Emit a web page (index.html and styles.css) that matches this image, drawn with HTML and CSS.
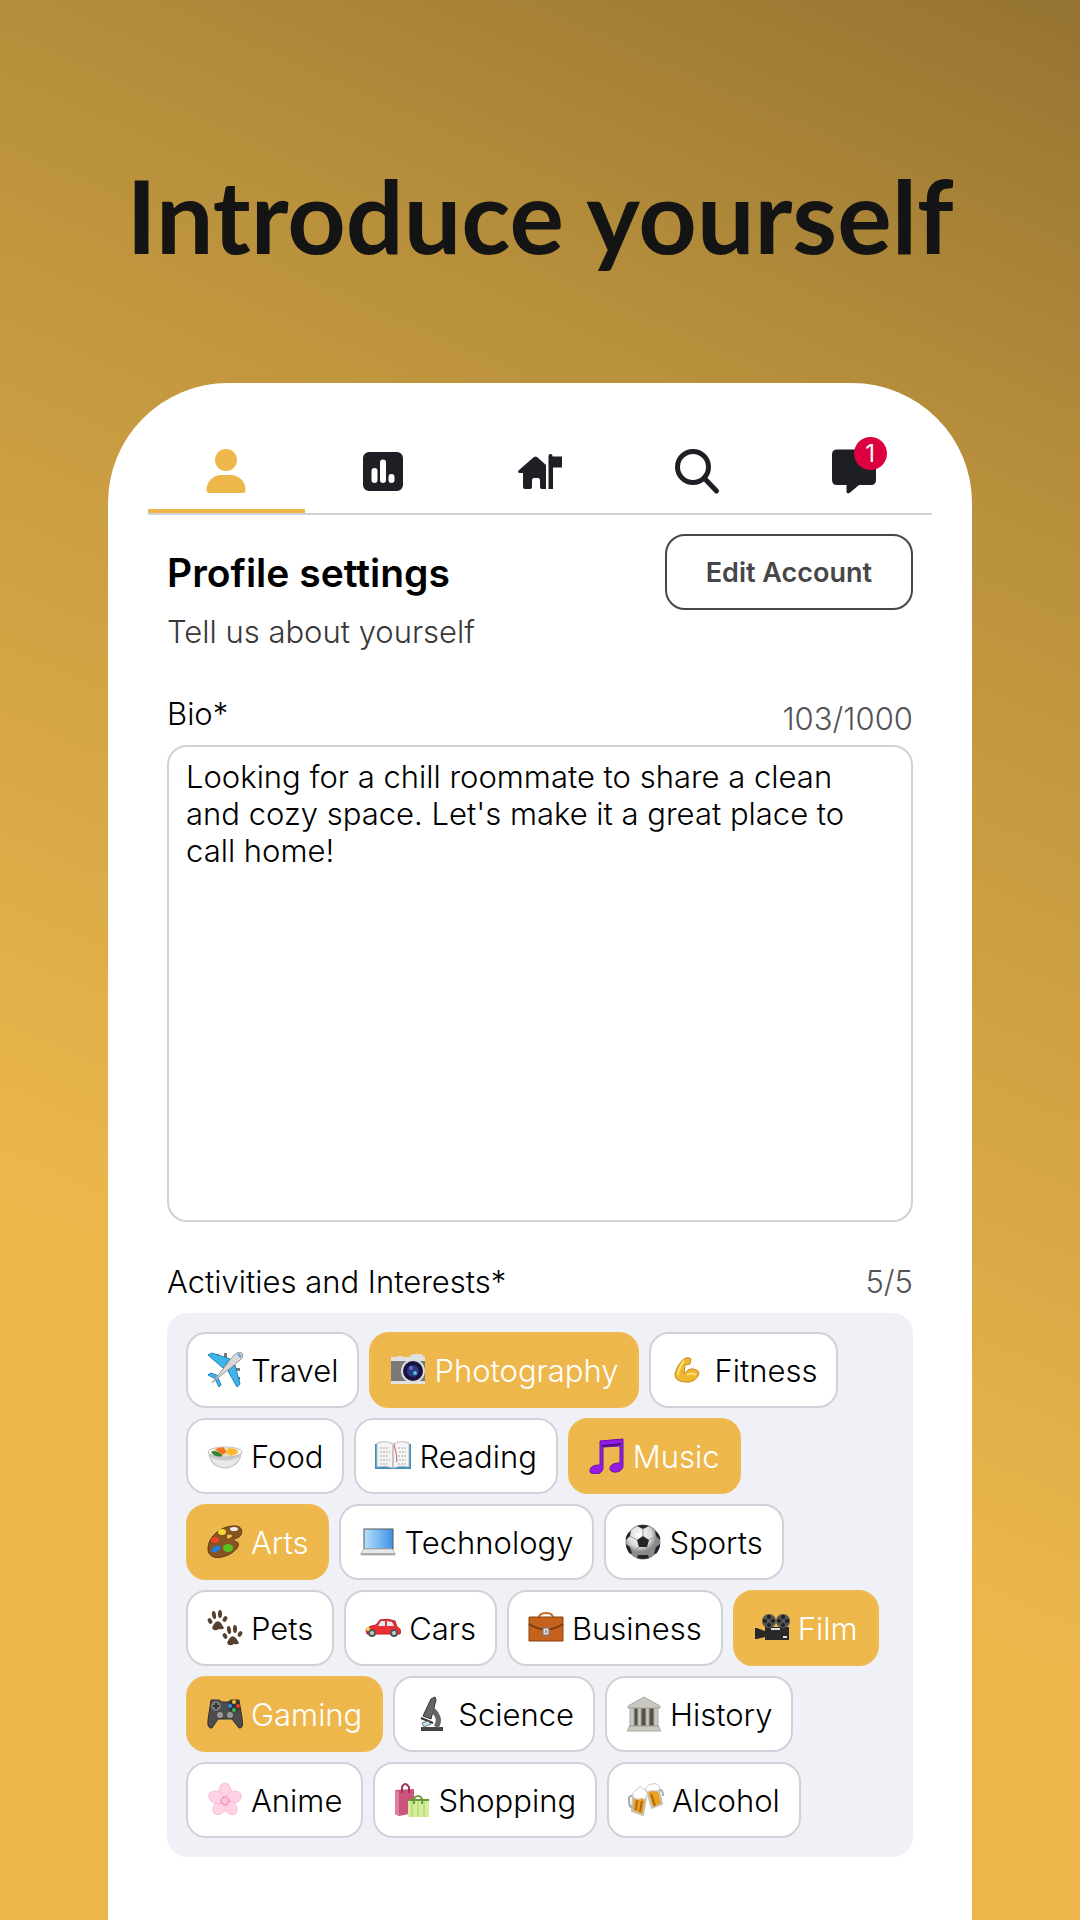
FILE: index.html
```html
<!DOCTYPE html>
<html lang="en">
<head>
<meta charset="utf-8">
<meta name="viewport" content="width=device-width, initial-scale=1">
<title>Introduce yourself</title>
<link rel="stylesheet" href="styles.css">
</head>
<body>
<h1 class="headline">Introduce yourself</h1>
<main class="phone">
  <nav class="tabs" aria-label="Main">
    <a class="tab tab-active" href="#profile" aria-label="Profile" aria-current="page">
      <svg class="tab-icon" viewBox="0 0 48 48"><circle cx="24" cy="13" r="11"/><path d="M4.500 43c0-8 6-15 15-15h9c9 0 15 7 15 15 0 2-1 3-2 3h-35c-1 0-2-1-2-3z"/></svg>
    </a>
    <a class="tab" href="#stats" aria-label="Statistics">
      <svg class="tab-icon" viewBox="0 0 48 48"><path fill-rule="evenodd" d="M10 5h28a6 6 0 0 1 6 6v27a6 6 0 0 1-6 6H10a6 6 0 0 1-6-6V11a6 6 0 0 1 6-6zM12.500 24v9a3 3 0 0 0 6 0v-9a3 3 0 0 0-6 0zM21 15.500V33a3 3 0 0 0 6 0V15.500a3 3 0 0 0-6 0zM29.500 30v3a3 3 0 0 0 6 0v-3a3 3 0 0 0-6 0z"/></svg>
    </a>
    <a class="tab" href="#listings" aria-label="Listings">
      <svg class="tab-icon" viewBox="0 0 48 48"><path d="M2.500 23.500 18 10q1.500-1 3 0l9 8v24h-4q-2 0-2-2v-7q0-2-2-2h-4q-2 0-2 2v7q0 2-2 2H9q-2 0-2-2V26H4q-3-.5-1.500-2.500zM32.500 9a2 2 0 0 1 4 0v.500H46v11h-9V42h-4.500z"/></svg>
    </a>
    <a class="tab" href="#search" aria-label="Search">
      <svg class="tab-icon tab-line" viewBox="0 0 48 48"><circle cx="20" cy="20" r="15.500"/><path d="m32 32 11.500 12"/></svg>
    </a>
    <a class="tab" href="#messages" aria-label="Messages, 1 unread">
      <span class="chat"><svg class="tab-icon" viewBox="0 0 48 48"><path d="M7 2.500h34q5 0 5 5V33q0 5-5 5H29l-9.500 8q-3 1-3-1v-7H7q-5 0-5-5V7.500q0-5 5-5z"/></svg><span class="badge">1</span></span>
    </a>
  </nav>
  <div class="content">
    <header class="profile-head">
      <div class="profile-text">
        <h2 class="profile-title">Profile settings</h2>
        <p class="profile-sub">Tell us about yourself</p>
      </div>
      <button class="edit" type="button">Edit Account</button>
    </header>
    <section class="field">
      <div class="field-head bio-head"><label for="bio">Bio*</label><span class="count bio-count">103/1000</span></div>
      <textarea class="bio" id="bio" maxlength="1000">Looking for a chill roommate to share a clean and cozy space. Let's make it a great place to call home!</textarea>
    </section>
    <section class="field interests">
      <div class="field-head"><h3 class="field-title" id="interests-title">Activities and Interests*</h3><span class="count">5/5</span></div>
      <div class="chips" role="group" aria-labelledby="interests-title">
        <button class="chip" type="button"><svg class="emoji" viewBox="0 0 36 36"><path fill="#777" d="M9 2h3v5H9zM17 1h3v5h-3zM28 16h5v3h-5zM28 25h5v3h-5z"/><path fill="#42b4ec" stroke="#2482b5" d="m1 3 4-2 18 6-7 9zM28 13l5 19-3 3-9-16zM1 23l3-2 8 3-3 3zM11 26l3 7-2 2-4-8z"/><path fill="#d8d8d8" stroke="#999" d="M5 31 27 3q4-4 8-2 2 4-3 8L6 30z"/><path stroke="#42a7da" stroke-width="2" d="m31 2 3 3"/></svg>Travel</button>
        <button class="chip chip-on" type="button" aria-pressed="true"><svg class="emoji" viewBox="0 0 36 36"><path fill="#ddd" d="M7 4h6v4H7zM20 4l3-2h9l3 5H18z"/><rect x="1" y="5" width="34" height="26" rx="1" fill="#797979"/><path fill="#e2e2e2" d="M1 5h34v4H1zM1 29h34v3H1z"/><circle cx="23" cy="19" r="12" fill="#ddd"/><circle cx="23" cy="19" r="10" fill="#17133e"/><circle cx="23" cy="19" r="6" fill="#303686"/><circle cx="25" cy="21" r="2" fill="#4cc3d6"/><circle cx="21" cy="16" r="2" fill="#6f70ce"/></svg>Photography</button>
        <button class="chip" type="button"><svg class="emoji" viewBox="0 0 36 36"><path fill="#edb72f" stroke="#c88c1e" d="M14 7q4-3 7 0l-1 5-5 1-1 9q5-6 9-5 8 1 5 7-4 7-13 6-11-1-10-8Q8 11 14 7z"/><path fill="none" stroke="#ffe178" stroke-width="2" d="M14 9Q9 15 8 23M17 23q5-3 9 0"/></svg>Fitness</button>
        <button class="chip" type="button"><svg class="emoji" viewBox="0 0 36 36"><path fill="#cacaca" d="M1 14h34q-1 11-10 15-6 3-14 0Q2 26 1 14z"/><ellipse cx="18" cy="14" rx="17" ry="5" fill="#fff" stroke="#bbb"/><ellipse cx="18" cy="14" rx="14" ry="4" fill="#e5dfb7"/><path fill="#2d8830" d="M4 14q5-3 12 4-8 2-12-4z"/><path fill="#f17423" d="m8 11 8-2 4 5-5 3z"/><path fill="#ffb72f" d="m22 10 7 1 2 4-7 3-5-4z"/><path fill="#e9e9e9" d="M3 19q14 7 30 0-5 10-15 10Q8 29 3 19z"/></svg>Food</button>
        <button class="chip" type="button"><svg class="emoji" viewBox="0 0 36 36"><path fill="#3c8ebf" d="M0 6h36v25H0z"/><path fill="#f5f5f5" stroke="#bbb" d="M2 5q9-3 16 1 7-4 16-1v24q-9-2-16 1-7-3-16-1z"/><path fill="none" stroke="#aaa" stroke-dasharray="2 1" d="M5 10h9M5 14h10M5 18h9M5 22h10M5 26h8M23 10h8M24 14h7M23 18h8M24 22h7M23 26h8"/><path fill="none" stroke="#d35b5b" d="M19 6q3 10 3 18"/><path stroke="#999" d="M18 7v23"/></svg>Reading</button>
        <button class="chip chip-on" type="button" aria-pressed="true"><svg class="emoji" viewBox="0 0 36 36"><path fill="#941be5" stroke="#6714a9" d="M11 3 34 1v27c0 7-13 8-13 3 0-5 5-6 10-6V8L14 9v21c0 7-13 8-13 3 0-5 5-6 10-6z"/><path stroke="#4c0e80" stroke-width="2" d="m13 8 19-2"/></svg>Music</button>
        <button class="chip chip-on" type="button" aria-pressed="true"><svg class="emoji" viewBox="0 0 36 36"><path fill="#875620" stroke="#5e3915" fill-rule="evenodd" d="M1 25C1 12 15 1 29 2c9 1 6 11 1 12-4 1-4 3 0 4 5 3-4 13-15 15-9 2-14-2-14-8zM19 13q1 4 5 1 4-3 0-4-5-1-5 3z"/><ellipse cx="15" cy="8" rx="4" ry="3" fill="#f4d931"/><ellipse cx="27" cy="5" rx="4" ry="2" fill="#eee"/><ellipse cx="8" cy="16" rx="4" ry="3" fill="#ef432a"/><ellipse cx="9" cy="25" rx="5" ry="3" fill="#277de1" transform="rotate(-30 9 25)"/><ellipse cx="21" cy="24" rx="5" ry="4" fill="#54c423"/></svg>Arts</button>
        <button class="chip" type="button"><svg class="emoji" viewBox="0 0 36 36"><defs><linearGradient id="screen"><stop stop-color="#b7e1fb"/><stop offset="1" stop-color="#3c92e5"/></linearGradient></defs><rect x="4" y="5" width="29" height="20" fill="url(#screen)" stroke="#555"/><path fill="#e8e8e8" stroke="#bbb" d="M4 25h28l3 4v2H1v-2z"/><path fill="#aaa" d="M1 29h34v2H1z"/></svg>Technology</button>
        <button class="chip" type="button"><svg class="emoji" viewBox="0 0 36 36"><defs><radialGradient id="ball" cx=".4" cy=".3"><stop stop-color="#fff"/><stop offset=".7" stop-color="#d8d8d8"/><stop offset="1" stop-color="#888"/></radialGradient></defs><circle cx="18" cy="18" r="17" fill="url(#ball)" stroke="#888"/><path fill="#252525" d="m18 12 6 4-2 7h-8l-2-7zM12 2q6-2 12 0l-6 3zM1 16l4-4 1-5Q0 11 1 16zM35 16l-4-4-1-5q6 4 5 9zM1 20l4 3 2 6-2 1q-4-5-4-10zM35 20l-4 3-2 6 2 1q4-5 4-10zM13 31h10l1 3q-6 2-12 0z"/><path fill="none" stroke="#999" d="M18 5v7M5 12l7 4M31 12l-7 4M8 28l6-5M28 28l-6-5"/></svg>Sports</button>
        <button class="chip" type="button"><svg class="emoji" viewBox="0 0 36 36"><g id="paw" fill="#56402e"><ellipse cx="3" cy="11" rx="2" ry="3" transform="rotate(-30 3 11)"/><ellipse cx="7" cy="5" rx="2" ry="4" transform="rotate(-10 7 5)"/><ellipse cx="13" cy="4" rx="2" ry="4"/><ellipse cx="18" cy="9" rx="2" ry="3" transform="rotate(30 18 9)"/><path d="M5 18q4-10 9-5l3 5q-1 2-5 1-5 3-7-1z"/></g><use href="#paw" x="15" y="15"/></svg>Pets</button>
        <button class="chip" type="button"><svg class="emoji" viewBox="0 0 36 36"><path fill="#ed2e34" stroke="#b71c25" d="M1 20q2-4 10-5l4-5q8-2 15 1l2 6q5 2 3 7H2z"/><path fill="#dcecf3" d="m16 11-3 5h7v-5zM22 11v5h7l-2-4z"/><circle cx="7" cy="23" r="4" fill="#555"/><circle cx="29" cy="23" r="4" fill="#555"/><circle cx="7" cy="23" r="2" fill="#ccc"/><circle cx="29" cy="23" r="2" fill="#ccc"/><circle cx="3" cy="19" r="2" fill="#f0d85c"/></svg>Cars</button>
        <button class="chip" type="button"><svg class="emoji" viewBox="0 0 36 36"><path fill="none" stroke="#c26a27" stroke-width="2" d="M11 8q0-5 7-5t7 5"/><path fill="#c5621d" stroke="#88400f" d="M1 7h34v24H1z"/><path fill="none" stroke="#7b390f" stroke-width="2" d="M1 14q17 11 34 0"/><rect x="15" y="18" width="6" height="7" fill="#ddd" stroke="#777"/><path stroke="#555" d="M18 20v3"/></svg>Business</button>
        <button class="chip chip-on" type="button" aria-pressed="true"><svg class="emoji" viewBox="0 0 36 36"><path fill="#292929" d="M11 17h24v13H11v-3l-8 2H1V18h2l8 3z"/><circle cx="15" cy="11" r="7" fill="#555"/><circle cx="29" cy="11" r="7" fill="#555"/><g fill="#222"><circle cx="15" cy="7" r="2"/><circle cx="11" cy="11" r="2"/><circle cx="19" cy="11" r="2"/><circle cx="15" cy="15" r="2"/><circle cx="29" cy="7" r="2"/><circle cx="25" cy="11" r="2"/><circle cx="33" cy="11" r="2"/><circle cx="29" cy="15" r="2"/></g><path stroke="#ddd" stroke-width="2" d="M17 19h9M29 27h4"/></svg>Film</button>
        <button class="chip chip-on" type="button" aria-pressed="true"><svg class="emoji" viewBox="0 0 36 36"><path fill="#4c4c4c" stroke="#303030" d="M4 4h8l3 2h6l3-2h8l3 18q2 11-3 10l-7-9H11l-6 9q-5 1-4-8z"/><circle cx="9" cy="10" r="5" fill="#777"/><path stroke="#333" stroke-width="2" d="M9 7v6M6 10h6"/><circle cx="27" cy="10" r="6" fill="#333"/><circle cx="27" cy="6" r="2" fill="#f4c52a"/><circle cx="23" cy="10" r="2" fill="#2d8cf0"/><circle cx="31" cy="10" r="2" fill="#e33"/><circle cx="27" cy="14" r="2" fill="#38b948"/><circle cx="13" cy="19" r="3" fill="#999"/><circle cx="23" cy="19" r="3" fill="#999"/></svg>Gaming</button>
        <button class="chip" type="button"><svg class="emoji" viewBox="0 0 36 36"><path fill="#444" d="M7 31h22v4H7z"/><path fill="#666" stroke="#333" d="m17 3 4-2 1 3-5 19-8-3z"/><path fill="none" stroke="#666" stroke-width="5" d="M19 14q9 9 3 17"/><path stroke="#333" stroke-width="2" d="m7 22 12 5"/><path fill="#bce5f3" stroke="#777" d="m8 27 6-2 3 3-7 3z"/></svg>Science</button>
        <button class="chip" type="button"><svg class="emoji" viewBox="0 0 36 36"><path fill="#55524b" d="M6 11h24v20H6z"/><path fill="#c9c8c0" stroke="#aaa89d" d="m2 10 16-9 16 9v2H2zM4 12h4v18H4zM12 12h3v18h-3zM20 12h3v18h-3zM28 12h4v18h-4zM3 30h30v2l2 3H1l2-3z"/></svg>History</button>
        <button class="chip" type="button"><svg class="emoji" viewBox="0 0 36 36"><g fill="#ffd3e5" stroke="#f8bfd6"><ellipse cx="18" cy="9" rx="6" ry="8"/><ellipse cx="18" cy="9" rx="6" ry="8" transform="rotate(72 18 18)"/><ellipse cx="18" cy="9" rx="6" ry="8" transform="rotate(144 18 18)"/><ellipse cx="18" cy="9" rx="6" ry="8" transform="rotate(216 18 18)"/><ellipse cx="18" cy="9" rx="6" ry="8" transform="rotate(288 18 18)"/></g><circle cx="18" cy="19" r="4" fill="#ffc0da" stroke="#e65692" stroke-dasharray="2 1"/></svg>Anime</button>
        <button class="chip" type="button"><svg class="emoji" viewBox="0 0 36 36"><path fill="#ca547e" d="m1 8 19-1v24L5 34l-4-2z"/><path fill="#dd7fa0" d="m1 8 4 2v24l-4-2z"/><path fill="none" stroke="#a33158" stroke-width="2" d="M8 11V5q3-6 7 0v6"/><path fill="#d7ed9b" d="M14 17h21v18H14z"/><path stroke="#b9df80" stroke-width="2" d="M18 17v18M24 17v18M30 17v18"/><path stroke="#679a32" stroke-width="2" d="M14 18h21"/><path fill="none" stroke="#679a32" stroke-width="2" d="M20 22q-1-8 4-8t4 8"/></svg>Shopping</button>
        <button class="chip" type="button"><svg class="emoji" viewBox="0 0 36 36"><path fill="#e8a21f" stroke="#c7c3b6" stroke-width="2" d="m19 9 11-4 4 17-10 4zM5 14l13 2-3 17-11-4z"/><path fill="none" stroke="#aaa" stroke-width="2" d="M6 14q-6-1-5 5 0 7 5 7M31 8q4-1 4 6"/><path fill="#fff" stroke="#ccc" d="M5 15q-1-6 4-7 3-6 6-1 5 0 4 7-2 5-5 2-4 3-9-1zM18 10q-1-5 3-7 8-4 11 3l-2 3q-7-1-12 1z"/><path stroke="#b8640e" stroke-width="2" d="m9 18-1 10M14 19l-2 11M23 12l4 12"/></svg>Alcohol</button>
      </div>
    </section>
  </div>
</main>
</body>
</html>
```
FILE: styles.css
```css
* { box-sizing: border-box; }

body {
  margin: 0;
  min-height: 100vh;
  display: flex;
  flex-direction: column;
  font-family: Inter, "Liberation Sans", sans-serif;
  font-size: 31px;
  font-weight: 300;
  line-height: 37px;
  color: #000;
  background: linear-gradient(204deg, #957331 0%, #b8903c 22%, #edb74c 70%);
}

h1, h2, h3, p { margin: 0; font-weight: inherit; font-size: inherit; }

button, textarea { font: inherit; color: inherit; }

.headline {
  padding: 155px 0 108px;
  text-align: center;
  font-family: Lato, sans-serif;
  font-weight: 700;
  font-size: 102px;
  line-height: 120px;
  color: #141414;
}

.phone {
  flex: 1;
  margin: 0 10%;
  padding: 60px 40px 63px;
  background: #fff;
  border-radius: 120px 120px 0 0;
}

.tabs {
  display: grid;
  grid-template-columns: repeat(5, 1fr);
  border-bottom: 2px solid #d1d1d9;
}

.tab {
  display: flex;
  justify-content: center;
  padding: 4px 0 14px;
  border-bottom: 4px solid transparent;
  color: #1e1f24;
}

.tab-active { color: #edb74c; border-color: #edb74c; }

.tab-icon { display: block; width: 48px; height: 48px; fill: currentColor; }

.tab-line { fill: none; stroke: currentColor; stroke-width: 5; stroke-linecap: round; }

.chat { position: relative; }

.badge {
  position: absolute;
  top: -10px;
  right: -9px;
  width: 33px;
  height: 33px;
  border-radius: 50%;
  background: #dd0040;
  color: #fff;
  font-size: 24px;
  font-weight: 400;
  line-height: 33px;
  text-align: center;
}

.content { padding: 19px 19px 0; }

.profile-head { display: flex; justify-content: space-between; align-items: flex-start; }

.profile-text { display: grid; gap: 17px; padding-top: 16px; }

.profile-title { font-size: 39px; line-height: 46px; font-weight: 600; }

.profile-sub { color: #383838; }

.edit {
  height: 76px;
  padding: 0 39px;
  border: 2px solid #474747;
  border-radius: 20px;
  background: #fff;
  color: #474747;
  font-size: 27px;
  font-weight: 600;
}

.field { margin-top: 45px; }

.interests { margin-top: 41px; }

.field-head { display: flex; justify-content: space-between; align-items: flex-end; padding-bottom: 13px; }

.bio-head { align-items: flex-start; padding-bottom: 8px; }

.bio-count { padding-top: 5px; }

.count { color: #535358; }

.bio {
  display: block;
  width: 100%;
  height: 477px;
  padding: 11px 17px;
  border: 2px solid #d1d1d9;
  border-radius: 20px;
  background: #fff;
  resize: none;
  outline: none;
}

.chips {
  display: flex;
  flex-wrap: wrap;
  gap: 10px;
  padding: 19px 27px 19px 19px;
  border-radius: 20px;
  background: #f0f1f6;
}

.chip {
  display: flex;
  align-items: center;
  gap: 8px;
  height: 76px;
  padding: 0 19px;
  border: 2px solid #d1d1d9;
  border-radius: 20px;
  background: #fff;
}

.chip-on { border-color: #efb951; background: #edb74c; color: #fff; }

.emoji { width: 36px; height: 36px; flex: none; }
```
